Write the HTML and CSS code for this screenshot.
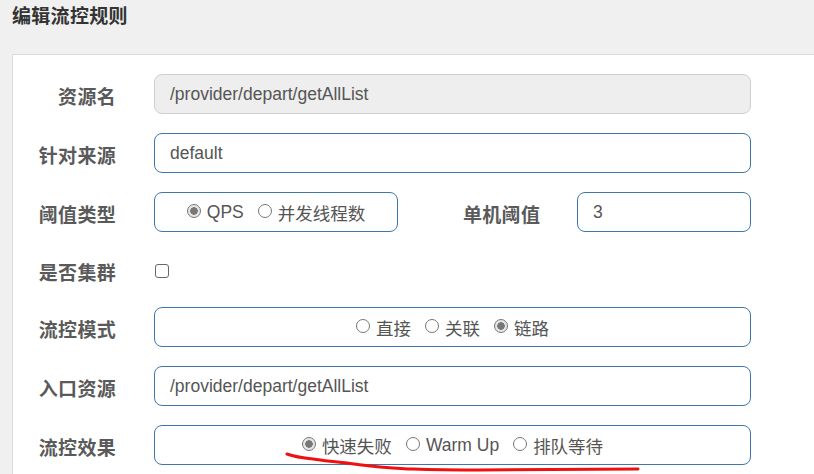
FILE: index.html
```html
<!DOCTYPE html>
<html lang="zh-CN">
<head>
<meta charset="utf-8">
<title>编辑流控规则</title>
<link rel="stylesheet" href="styles.css">
</head>
<body>
<div class="page">
  <div class="title">编辑流控规则</div>
  <div class="card">
    <div class="row">
      <div class="label">资源名</div>
      <div class="field wide disabled">/provider/depart/getAllList</div>
    </div>
    <div class="row">
      <div class="label">针对来源</div>
      <div class="field wide">default</div>
    </div>
    <div class="row">
      <div class="label">阈值类型</div>
      <div class="field group small">
        <span class="opt"><span class="radio on"></span>QPS</span>
        <span class="opt"><span class="radio"></span>并发线程数</span>
      </div>
      <div class="label label2">单机阈值</div>
      <div class="field num">3</div>
    </div>
    <div class="row short">
      <div class="label">是否集群</div>
      <span class="checkbox"></span>
    </div>
    <div class="row">
      <div class="label">流控模式</div>
      <div class="field wide group">
        <span class="opt"><span class="radio"></span>直接</span>
        <span class="opt"><span class="radio"></span>关联</span>
        <span class="opt"><span class="radio on"></span>链路</span>
      </div>
    </div>
    <div class="row">
      <div class="label">入口资源</div>
      <div class="field wide">/provider/depart/getAllList</div>
    </div>
    <div class="row">
      <div class="label">流控效果</div>
      <div class="field wide group">
        <span class="opt"><span class="radio on"></span>快速失败</span>
        <span class="opt"><span class="radio"></span>Warm Up</span>
        <span class="opt"><span class="radio"></span>排队等待</span>
      </div>
    </div>
  </div>
  <svg class="scribble" width="814" height="474" viewBox="0 0 814 474">
    <path d="M287 454 C295 457 303 458 313 459 C325 461 337 462 347 463 C360 465 370 466 380 467 C392 468 403 469 413 469 C440 470 460 470 480 470 L638 469" fill="none" stroke="#f01010" stroke-width="3" stroke-linecap="round"/>
  </svg>
</div>
</body>
</html>
```
FILE: styles.css
```css
html, body {
  margin: 0;
  padding: 0;
  background: #f0f0f0;
  overflow: hidden;
}
.page {
  width: 814px;
  height: 474px;
  position: relative;
  overflow: hidden;
  font-family: "Liberation Sans", "Noto Sans CJK SC", sans-serif;
}
.title {
  padding-left: 12px;
  height: 30px;
  line-height: 30px;
  font-family: "Noto Sans CJK SC", sans-serif;
  font-weight: bold;
  font-size: 19px;
  color: #333;
  letter-spacing: 0.3px;
}
.card {
  margin-top: 24px;
  margin-left: 12px;
  width: 900px;
  height: 500px;
  background: #fff;
  border-top: 1px solid #dcdcdc;
  border-left: 1px solid #dcdcdc;
  padding-top: 19px;
  display: flex;
  flex-direction: column;
  gap: 19px;
}
.row {
  display: flex;
  align-items: center;
  height: 40px;
}
.row.short {
  height: 37px;
}
.label {
  width: 103px;
  margin-right: 38px;
  text-align: right;
  white-space: nowrap;
  font-family: "Noto Sans CJK SC", sans-serif;
  font-weight: bold;
  font-size: 19px;
  color: #5a5a5a;
  padding-top: 3px;
  letter-spacing: 0.3px;
}
.label2 {
  width: 76px;
  margin-left: 65px;
  text-align: left;
}
.field {
  box-sizing: border-box;
  height: 40px;
  border: 1px solid #3c77b0;
  border-radius: 8px;
  padding-left: 15px;
  display: flex;
  align-items: center;
  font-size: 17.5px;
  color: #555;
  background: #fff;
}
.field.wide {
  width: 597px;
}
.field.disabled {
  background: #eeeeee;
  border-color: #cfcfcf;
}
.field.small {
  width: 244px;
}
.field.num {
  width: 174px;
}
.group {
  justify-content: center;
  padding-left: 0;
  gap: 14px;
}
.opt {
  display: inline-flex;
  align-items: center;
  gap: 6px;
  font-family: "Liberation Sans", "Noto Sans CJK SC", sans-serif;
  font-size: 17.5px;
  color: #555;
}
.radio {
  box-sizing: border-box;
  width: 14px;
  height: 14px;
  border: 1.5px solid #777;
  border-radius: 50%;
  background: #fff;
  display: inline-block;
  position: relative;
  top: -1px;
}
.radio.on {
  background: radial-gradient(circle, #777 0 3.5px, #e6e6e6 4px);
}
.checkbox {
  box-sizing: border-box;
  width: 14px;
  height: 14px;
  border: 1.5px solid #666;
  border-radius: 3px;
  background: #fff;
  margin-top: 3px;
  margin-left: 1px;
}
.scribble {
  position: absolute;
  left: 0;
  top: 0;
  pointer-events: none;
}
```
